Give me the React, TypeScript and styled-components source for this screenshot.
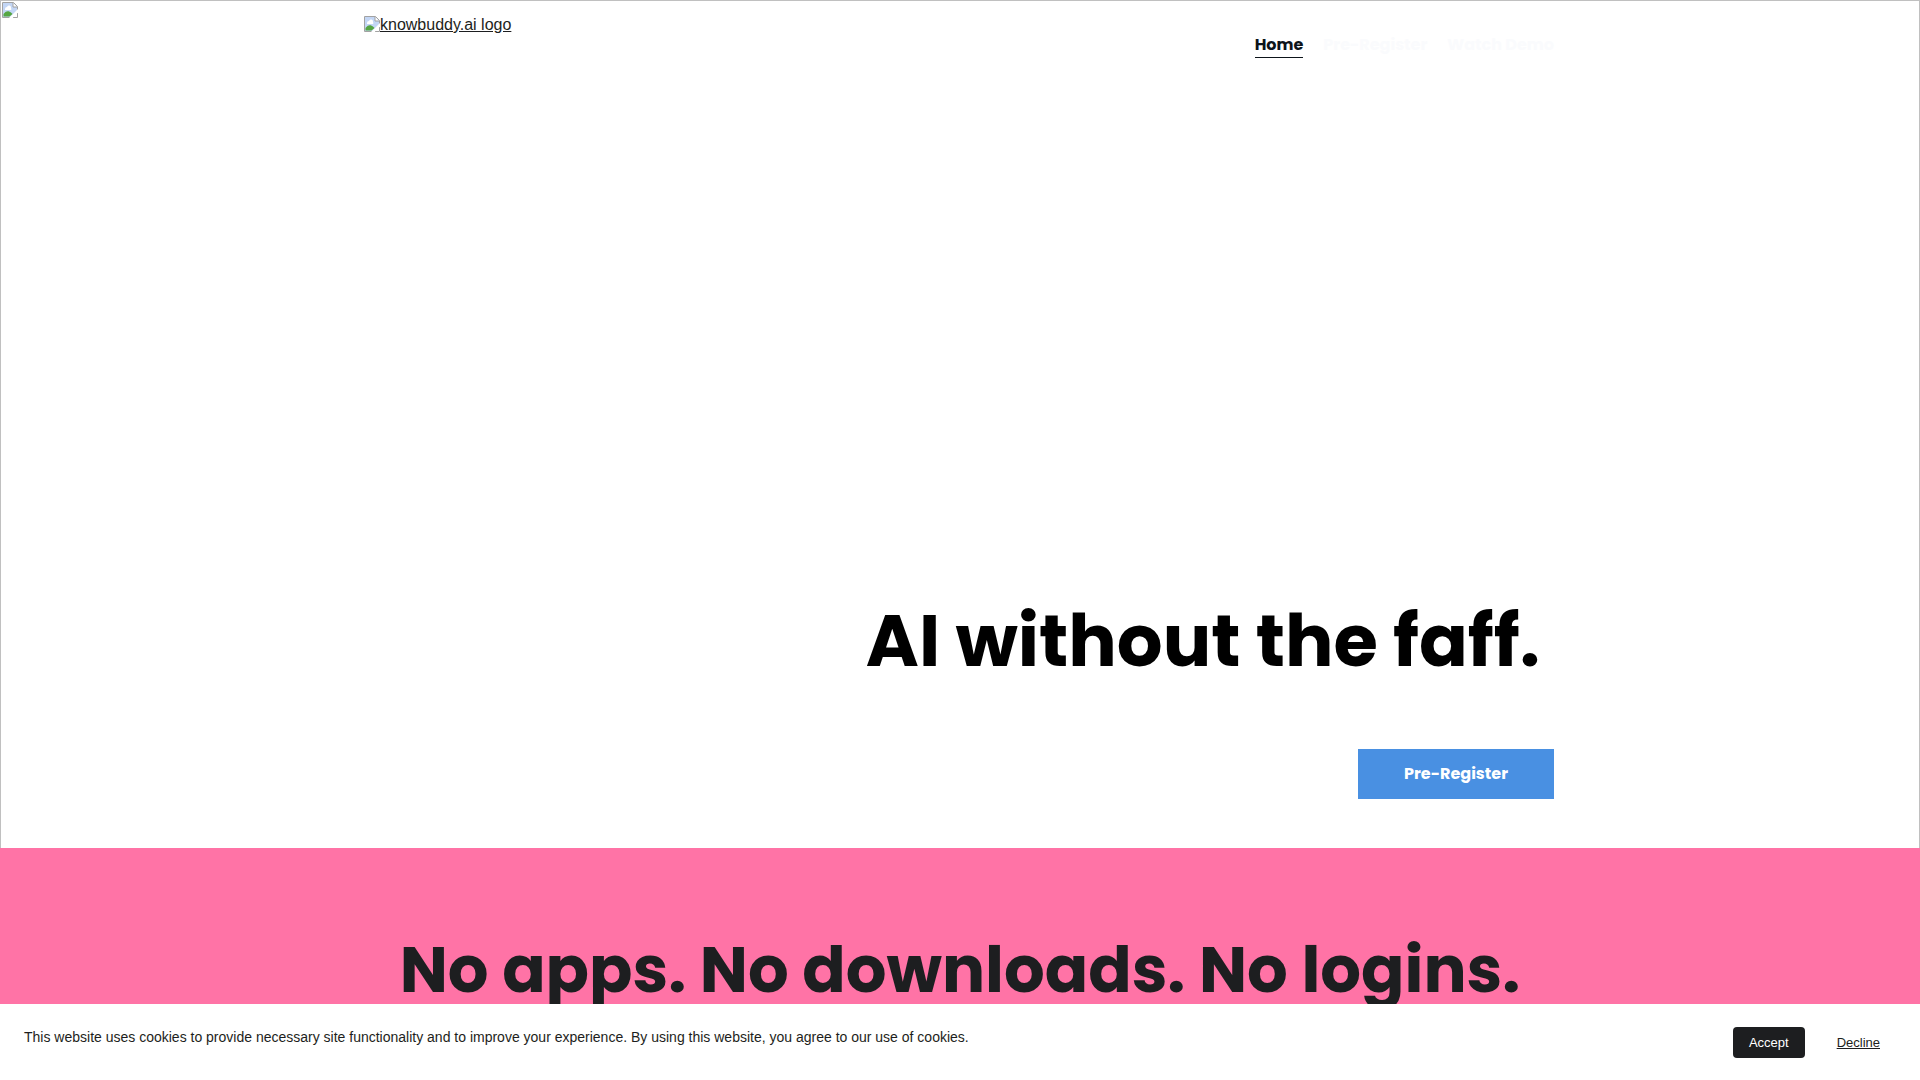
import React from "react";
import styled, { createGlobalStyle } from "styled-components";

const display = `Poppins, Inter, "Open Sans", sans-serif`;
const body = `Arial, "Liberation Sans", Helvetica, sans-serif`;

const GlobalStyle = createGlobalStyle`
  *, *::before, *::after { box-sizing: border-box; }
  body {
    margin: 0;
    background: #ffffff;
    color: #1d1e20;
    font-family: ${body};
    font-size: 16px;
  }
  h1, h2, p { margin: 0; }
`;

const Page = styled.div`
  display: flex;
  flex-direction: column;
  min-height: 100vh;
`;

const Hero = styled.div`
  display: flex;
  flex-direction: column;
  align-items: center;
  position: relative;
  min-height: 848px;
  border: 1px solid #c0c0c0;
  border-bottom: 0;
`;

const HeroImageIcon = styled.div`
  position: absolute;
  top: 1px;
  left: 1px;
  line-height: 0;
`;

const Header = styled.header`
  display: flex;
  justify-content: space-between;
  align-items: flex-start;
  width: 100%;
  max-width: 1224px;
  padding: 15px 18px 0 16px;
`;

const LogoLink = styled.a`
  display: flex;
  color: #1d1e20;
  font-size: 16px;
  line-height: 18px;
  text-decoration: underline;
`;

const Nav = styled.nav`
  display: flex;
  gap: 20px;
  padding-top: 16px;
`;

const NavLink = styled.a<{ $active?: boolean }>`
  border-bottom: 1px solid ${(p) => (p.$active ? "#0d141a" : "transparent")};
  color: ${(p) => (p.$active ? "#0d141a" : "#fafbfd")};
  font-family: ${display};
  font-size: 16px;
  font-weight: 700;
  line-height: 25px;
  text-decoration: none;
`;

const HeroContent = styled.main`
  display: flex;
  flex: 1;
  flex-direction: column;
  justify-content: flex-end;
  align-items: flex-end;
  gap: 60px;
  width: 100%;
  max-width: 1224px;
  padding: 0 18px 49px 16px;
`;

const HeroTitle = styled.h1`
  padding-right: 14px;
  color: #000000;
  font-family: ${display};
  font-size: 72px;
  font-weight: 700;
  line-height: 96px;
  text-align: right;
`;

const RegisterButton = styled.button`
  padding: 0 44px 2px;
  min-width: 196px;
  height: 50px;
  border: 0;
  background: #4990e2;
  color: #ffffff;
  font-family: ${display};
  font-size: 16px;
  font-weight: 700;
  cursor: pointer;
`;

const Promise = styled.section`
  flex: 1;
  padding: 82px 16px 0;
  background: #ff73a6;
`;

const PromiseTitle = styled.h2`
  color: #1d1e20;
  font-family: ${display};
  font-size: 64px;
  font-weight: 700;
  line-height: 80px;
  text-align: center;
`;

const CookieBar = styled.aside`
  position: fixed;
  right: 0;
  bottom: 0;
  left: 0;
  display: flex;
  justify-content: space-between;
  align-items: flex-start;
  padding: 23px 24px 22px;
  background: #ffffff;
`;

const CookieText = styled.p`
  font-size: 14px;
  line-height: 20px;
`;

const CookieActions = styled.div`
  display: flex;
  gap: 16px;
`;

const CookieButton = styled.button<{ $solid?: boolean }>`
  height: 31px;
  padding: 0 16px;
  border: 0;
  border-radius: 4px;
  background: ${(p) => (p.$solid ? "#1d1e20" : "transparent")};
  color: ${(p) => (p.$solid ? "#ffffff" : "#1d1e20")};
  font-family: ${body};
  font-size: 13px;
  text-decoration: ${(p) => (p.$solid ? "none" : "underline")};
  cursor: pointer;
`;

function MissingImage() {
  return (
    <svg width="16" height="16" viewBox="0 0 16 16" aria-hidden="true">
      <path d="M1 1h10l4 4v3l-7 7H1z" fill="#c3d6f5" />
      <path d="M3 7a2 2 0 0 1 2-2 2 2 0 0 1 4 1 1.500 1.500 0 0 1 0 2H3z" fill="#ffffff" />
      <path d="M1.500 14.500V12c2-3 5-4 8-1l1 1-3 2.500z" fill="#55a642" />
      <path d="M11 1v4h4z" fill="#ffffff" />
      <path d="M7.500 15.500H.5V.5h11l4 4v3M11 .5v4.500h4.500" fill="none" stroke="#a2a2a2" />
      <path d="M15.500 11v4.500H11" fill="none" stroke="#a2a2a2" />
      <path d="M16 7.500 8 15.500h3l5-5z" fill="#ffffff" />
    </svg>
  );
}

export default function App() {
  return (
    <>
      <GlobalStyle />
      <Page>
        <Hero>
          <HeroImageIcon>
            <MissingImage />
          </HeroImageIcon>
          <Header>
            <LogoLink href="#home">
              <MissingImage />
              <span>knowbuddy.ai logo</span>
            </LogoLink>
            <Nav>
              <NavLink href="#home" $active>Home</NavLink>
              <NavLink href="#pre-register">Pre-Register</NavLink>
              <NavLink href="#watch-demo">Watch Demo</NavLink>
            </Nav>
          </Header>
          <HeroContent>
            <HeroTitle>AI without the faff.</HeroTitle>
            <RegisterButton type="button">Pre-Register</RegisterButton>
          </HeroContent>
        </Hero>
        <Promise>
          <PromiseTitle>No apps. No downloads. No logins.</PromiseTitle>
        </Promise>
      </Page>
      <CookieBar>
        <CookieText>
          This website uses cookies to provide necessary site functionality and to improve your
          experience. By using this website, you agree to our use of cookies.
        </CookieText>
        <CookieActions>
          <CookieButton type="button" $solid>Accept</CookieButton>
          <CookieButton type="button">Decline</CookieButton>
        </CookieActions>
      </CookieBar>
    </>
  );
}
